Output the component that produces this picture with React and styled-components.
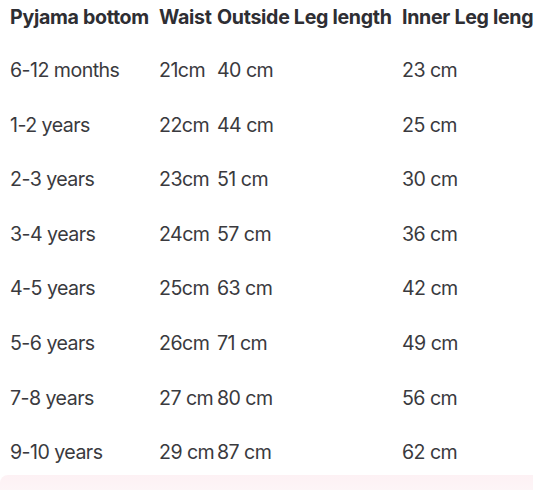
import React from "react";
import styled, { createGlobalStyle } from "styled-components";

const Global = createGlobalStyle`
  html, body { margin: 0; padding: 0; background: #ffffff; overflow: hidden; }
  body { font-family: Inter, "Noto Sans", sans-serif; }
`;

const Page = styled.div`
  width: 533px;
  height: 490px;
  overflow: hidden;
  display: flex;
  flex-direction: column;
  background: #fff;
`;

const Row = styled.div`
  display: grid;
  grid-template-columns: 149px 58px 185px 1fr;
  padding-left: 10px;
  height: ${(p) => (p.$head ? "38px" : "54.6px")};
  box-sizing: border-box;
  padding-top: ${(p) => (p.$head ? "6px" : "21px")};
  white-space: nowrap;
  flex-shrink: 0;
`;

const Cell = styled.div`
  font-size: ${(p) => (p.$head ? "19.6px" : "19.6px")};
  line-height: 22px;
  letter-spacing: ${(p) => (p.$head ? "-0.3px" : "-0.55px")};
  font-weight: ${(p) => (p.$head ? 700 : 400)};
  color: ${(p) => (p.$head ? "#2e2e33" : "#3a3a3e")};
  white-space: nowrap;
  overflow: visible;
`;

const Band = styled.div`
  flex: 1;
  background: linear-gradient(180deg, #fdf1f4 0%, #fdf5f7 100%);
  border-top-left-radius: 8px;
`;

const rows = [
  ["6-12 months", "21cm", "40 cm", "23 cm"],
  ["1-2 years", "22cm", "44 cm", "25 cm"],
  ["2-3 years", "23cm", "51 cm", "30 cm"],
  ["3-4 years", "24cm", "57 cm", "36 cm"],
  ["4-5 years", "25cm", "63 cm", "42 cm"],
  ["5-6 years", "26cm", "71 cm", "49 cm"],
  ["7-8 years", "27 cm", "80 cm", "56 cm"],
  ["9-10 years", "29 cm", "87 cm", "62 cm"],
];

export default function App() {
  return (
    <>
      <Global />
      <Page>
        <Row $head>
          <Cell $head>Pyjama bottom</Cell>
          <Cell $head>Waist</Cell>
          <Cell $head>Outside Leg length</Cell>
          <Cell $head>Inner Leg length</Cell>
        </Row>
        {rows.map((r) => (
          <Row key={r[0]}>
            {r.map((c, i) => (
              <Cell key={i}>{c}</Cell>
            ))}
          </Row>
        ))}
        <Band />
      </Page>
    </>
  );
}
